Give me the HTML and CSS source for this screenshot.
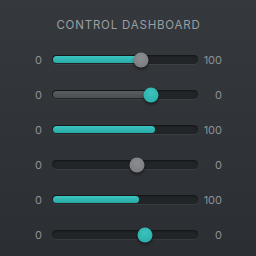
FILE: index.html
```html
<!DOCTYPE html>
<html lang="en">
<head>
    <meta charset="UTF-8">
    <title>Control Dashboard</title>
    <link rel="stylesheet" href="styles.css">
</head>
<body>
    <div class="panel">
        <h1 class="title">CONTROL DASHBOARD</h1>
        <div class="sliders">
            <div class="row">
                <span class="min">0</span>
                <div class="track">
                    <div class="fill teal" style="width: 61%"></div>
                    <div class="thumb gray" style="left: 61%"></div>
                </div>
                <span class="max">100</span>
            </div>
            <div class="row">
                <span class="min">0</span>
                <div class="track">
                    <div class="fill dim" style="width: 68%"></div>
                    <div class="thumb teal" style="left: 68%"></div>
                </div>
                <span class="max">0</span>
            </div>
            <div class="row">
                <span class="min">0</span>
                <div class="track">
                    <div class="fill teal" style="width: 70%"></div>
                </div>
                <span class="max">100</span>
            </div>
            <div class="row">
                <span class="min">0</span>
                <div class="track">
                    <div class="thumb gray" style="left: 58%"></div>
                </div>
                <span class="max">0</span>
            </div>
            <div class="row">
                <span class="min">0</span>
                <div class="track">
                    <div class="fill teal" style="width: 59%"></div>
                </div>
                <span class="max">100</span>
            </div>
            <div class="row">
                <span class="min">0</span>
                <div class="track">
                    <div class="thumb teal" style="left: 64%"></div>
                </div>
                <span class="max">0</span>
            </div>
        </div>
    </div>
</body>
</html>
```

FILE: styles.css
```css
* {
    margin: 0;
    padding: 0;
    box-sizing: border-box;
}

body {
    width: 256px;
    height: 256px;
    overflow: hidden;
    font-family: Inter, "Liberation Sans", sans-serif;
    background: linear-gradient(#35383c, #2b2e32);
}

.panel {
    padding-top: 18px;
}

.title {
    font-size: 11.5px;
    font-weight: 400;
    line-height: 14px;
    letter-spacing: 0.8px;
    color: #9b9fa3;
    text-align: center;
    padding-left: 1px;
}

.sliders {
    display: flex;
    flex-direction: column;
    margin-top: 10px;
}

.row {
    display: flex;
    align-items: center;
    height: 35px;
}

.min, .max {
    font-size: 11px;
    color: #8d9195;
}

.min {
    width: 42px;
    margin-right: 10px;
    text-align: right;
}

.max {
    width: 24px;
    text-align: right;
}

.track {
    position: relative;
    width: 146px;
    height: 9px;
    border-radius: 5px;
    background: #222528;
    box-shadow: inset 0 1px 2px rgba(0, 0, 0, 0.5), 0 1px 0 rgba(255, 255, 255, 0.05);
}

.fill {
    position: absolute;
    top: 1px;
    left: 1px;
    bottom: 1px;
    border-radius: 4px;
}

.fill.teal {
    background: linear-gradient(#3cc4bf, #27aaa6);
}

.fill.dim {
    background: linear-gradient(#5a5d60, #4c4f52);
}

.thumb {
    position: absolute;
    top: 50%;
    width: 15px;
    height: 15px;
    border-radius: 50%;
    transform: translate(-50%, -50%);
    box-shadow: 0 2px 3px rgba(0, 0, 0, 0.45);
}

.thumb.gray {
    background: radial-gradient(circle at 50% 35%, #8b8d90, #76787b);
}

.thumb.teal {
    background: radial-gradient(circle at 50% 35%, #3cc3be, #26aaa5);
}
```
